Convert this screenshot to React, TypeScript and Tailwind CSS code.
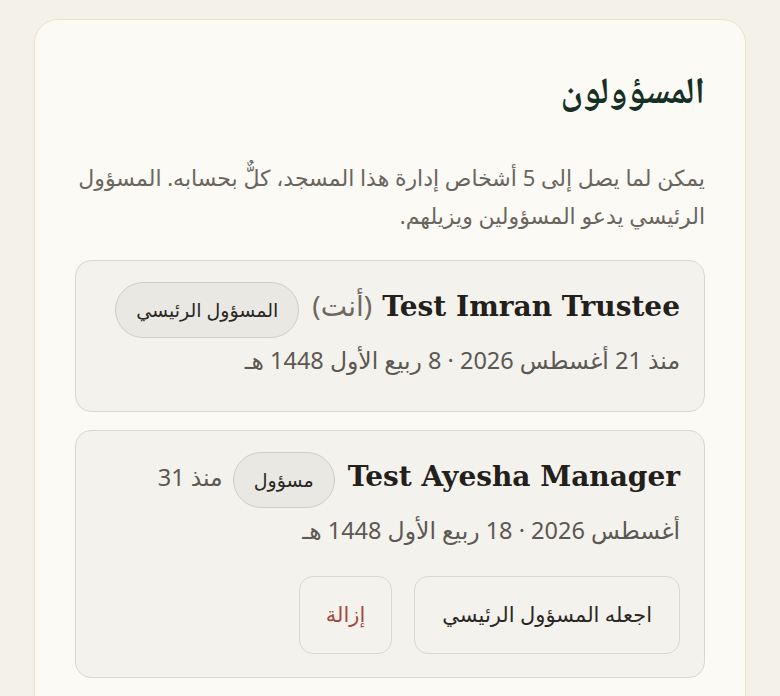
const serif = "font-['DejaVu_Serif','Noto_Naskh_Arabic','Noto_Serif_Arabic','Amiri',serif]";

interface Member {
  name: string;
  you?: boolean;
  role: string;
  since: string;
  actions?: boolean;
}

const members: Member[] = [
  {
    name: 'Test Imran Trustee',
    you: true,
    role: 'المسؤول الرئيسي',
    since: 'منذ 21 أغسطس 2026 · 8 ربيع الأول 1448 هـ',
  },
  {
    name: 'Test Ayesha Manager',
    role: 'مسؤول',
    since: 'منذ 31 أغسطس 2026 · 18 ربيع الأول 1448 هـ',
    actions: true,
  },
];

const MemberCard = ({ member }: { member: Member }) => (
  <div className="rounded-[16px] border border-[#dbd7ce] bg-[#f4f2ec] px-[24px] pt-[21px] pb-[23px]">
    <p className="pb-[6px] text-[23.5px] leading-[44px] text-[#5c5853]">
      <span className={`${serif} text-[28px] font-bold text-[#23201c]`}>{member.name}</span>
      {member.you && <span className="ms-[10px] text-[28px] text-[#6d6862]">(أنت)</span>}
      <span className="ms-[13px] me-[10px] inline-flex h-[56px] items-center rounded-full border border-[#d0cdc4] bg-[#e9e8e2] px-[20px] align-middle text-[19px] leading-none text-[#2a2723]">
        {member.role}
      </span>
      {member.since}
    </p>
    {member.actions && (
      <div className="mt-[18px] flex gap-[22px]">
        <button className="h-[78px] rounded-[14px] border border-[#dcd8cf] px-[27px] text-[21px] text-[#2a2723]">
          اجعله المسؤول الرئيسي
        </button>
        <button className="h-[78px] rounded-[14px] border border-[#dcd8cf] px-[26px] text-[21px] text-[#a34a3f]">
          إزالة
        </button>
      </div>
    )}
  </div>
);

export default function App() {
  return (
    <div
      dir="rtl"
      className="h-[696px] overflow-hidden bg-[#f3f1ea] px-[34px] pt-[19px] font-['Noto_Sans','DejaVu_Sans',sans-serif]"
    >
      <div className="min-h-[720px] rounded-[24px] border border-[#ebe3c8] bg-[#fcfaf4] px-[40px] pt-[46px]">
        <h2 className={`${serif} text-[37px] font-bold leading-[48px] text-[#163026]`}>المسؤولون</h2>
        <p className="mt-[44px] text-[22px] leading-[38px] text-[#6a665f]">
          يمكن لما يصل إلى 5 أشخاص إدارة هذا المسجد، كلٌّ بحسابه. المسؤول الرئيسي يدعو المسؤولين ويزيلهم.
        </p>
        <div className="mt-[26px] flex flex-col gap-[18px]">
          {members.map((m) => (
            <MemberCard key={m.name} member={m} />
          ))}
        </div>
      </div>
    </div>
  );
}
